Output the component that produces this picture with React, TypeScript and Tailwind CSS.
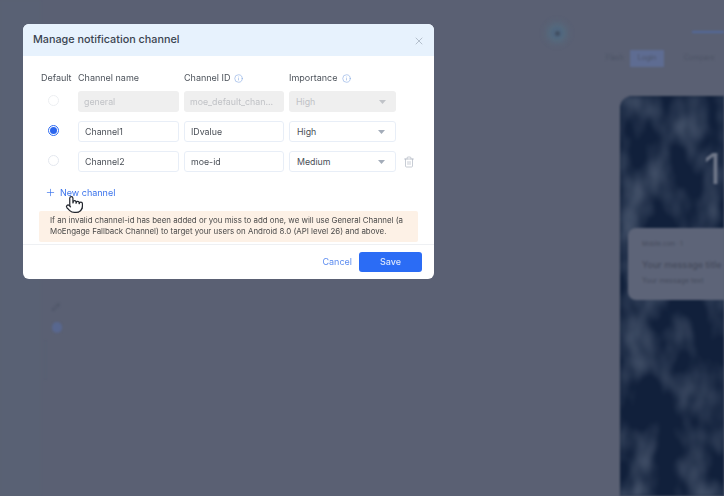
import { Info, Pencil, Plus, Pointer, Trash2, X } from "lucide-react"

function Caret({ muted }: { muted?: boolean }) {
  return (
    <svg width="7" height="4" viewBox="0 0 7 4" className="shrink-0">
      <path d="M0 0h7L3.5 4z" fill={muted ? "#c0c3c8" : "#a3acb9"} />
    </svg>
  )
}

function Radio({ checked, disabled }: { checked?: boolean; disabled?: boolean }) {
  return (
    <div className="w-[37px] pl-[7px] pb-[2px] shrink-0 flex items-center">
      {checked ? (
        <div className="w-[11px] h-[11px] rounded-full border border-[#2f6bf0] flex items-center justify-center">
          <div className="w-[7px] h-[7px] rounded-full bg-[#2b66ee]" />
        </div>
      ) : (
        <div className={`w-[11px] h-[11px] rounded-full border ${disabled ? "border-[#eceef1]" : "border-[#e3e7ee]"}`} />
      )}
    </div>
  )
}

function Field({ value, width, disabled }: { value: string; width: string; disabled?: boolean }) {
  return (
    <div
      className={`${width} h-[21px] shrink-0 rounded-[3px] px-[6px] flex items-center text-[8.8px] truncate ${
        disabled ? "bg-[#efefef] text-[#c0c2c6]" : "bg-white border border-[#e8eef7] text-[#4a4f57]"
      }`}
    >
      {value}
    </div>
  )
}

function Select({ value, disabled }: { value: string; disabled?: boolean }) {
  return (
    <div
      className={`w-[107px] h-[21px] shrink-0 rounded-[3px] pl-[7px] pr-[10px] flex items-center justify-between text-[8.8px] ${
        disabled ? "bg-[#efefef] text-[#c0c2c6]" : "bg-white border border-[#e8eef7] text-[#4a4f57]"
      }`}
    >
      <span>{value}</span>
      <Caret muted={disabled} />
    </div>
  )
}

export default function App() {
  return (
    <div className="relative w-[724px] h-[496px] overflow-hidden bg-[#5a6073] font-['Inter',sans-serif]">
      {/* dimmed page behind the dialog */}
      <div className="flex h-full blur-[1px]">
        <div className="w-[41px] shrink-0 bg-[#596174]" />
        <div className="flex-1 pt-[27px] flex flex-col pl-[11px]">
          <div className="self-end mr-[43px] w-[12px] h-[12px] rounded-full bg-[#50667e] shadow-[0_0_6px_4px_#546c80] flex items-center justify-center">
            <div className="w-[5px] h-[5px] rounded-full bg-[#414f63]" />
          </div>
          <Pencil size={8} className="mt-[264px] text-[#474f60]" />
          <div className="w-[10px] h-[11px] rounded-full bg-[#58678f] mt-[11px]" />
          <div className="w-px h-[40px] ml-[-7px] mt-[7px] bg-[#566073]" />
        </div>
        <div className="w-[118px] shrink-0 flex flex-col items-start">
          <div className="h-[33px] w-full flex items-end justify-start">
            <div className="w-[32px] h-[2px] ml-[86px] bg-[#52699c]" />
          </div>
          <div className="mt-[17px] flex items-center text-[7px] text-[#4c5365]">
            <span className="w-[24px]">Flash</span>
            <span className="w-[34px] h-[17px] bg-[#5e6c92] flex items-center justify-center">Login</span>
            <span className="ml-[20px]">Compare</span>
          </div>
          <div className="relative mt-[29px] w-[104px] ml-[14px] h-[400px] rounded-tl-[12px] bg-[#11203b] overflow-hidden">
            <svg width="104" height="400" viewBox="0 0 104 400" className="absolute inset-0">
              <filter id="waves" x="0" y="0" width="100%" height="100%">
                <feTurbulence type="fractalNoise" baseFrequency="0.03 0.018" numOctaves="3" seed="7" />
                <feColorMatrix
                  type="matrix"
                  values="0 0 0 0 0.23  0 0 0 0 0.28  0 0 0 0 0.37  1.2 0 0 0 -0.5"
                />
                <feGaussianBlur stdDeviation="1.5" />
              </filter>
              <rect width="104" height="400" filter="url(#waves)" />
            </svg>
            <div className="absolute left-[84px] top-[48px] text-[42px] leading-[50px] text-[#70788a]">1</div>
            <div className="absolute left-[8px] top-[132px] w-[120px] h-[72px] rounded-[8px] bg-[#5d6478] px-[14px] pt-[11px] text-[7px] text-[#454b5c]">
              <div className="text-[6px]">Mobile.com · 1</div>
              <div className="mt-[10px] text-[9px] font-medium whitespace-nowrap">Your message title</div>
              <div className="mt-[4px] whitespace-nowrap">Your message text</div>
            </div>
          </div>
        </div>
      </div>

      {/* manage channel dialog */}
      <div className="absolute left-[23px] top-[24px] w-[411px] h-[255px] rounded-[6px] bg-white overflow-hidden flex flex-col blur-[0.3px]">
        <div className="h-[32px] shrink-0 bg-[#e7f2fd] pl-[10px] pr-[9px] pt-[1px] flex items-center justify-between">
          <span className="text-[10.8px] font-medium text-[#3a4450]">Manage notification channel</span>
          <X size={12} strokeWidth={1.5} className="text-[#a3afbc]" />
        </div>

        <div className="flex-1 pt-[16px]">
          <div className="flex items-center h-[12px] pl-[18px] text-[9px] text-[#4d535b]">
            <span className="w-[37px] shrink-0">Default</span>
            <span className="w-[106px] shrink-0">Channel name</span>
            <span className="w-[105px] shrink-0 flex items-center gap-[4px]">
              Channel ID <Info size={9} strokeWidth={1.5} className="text-[#7ea4e0]" />
            </span>
            <span className="flex items-center gap-[4px]">
              Importance <Info size={9} strokeWidth={1.5} className="text-[#7ea4e0]" />
            </span>
          </div>

          <div className="mt-[7px] pl-[18px] flex flex-col gap-[9px]">
            <div className="flex items-center">
              <Radio disabled />
              <Field value="general" width="w-[101px] mr-[5px]" disabled />
              <Field value="moe_default_chan..." width="w-[100px] mr-[5px]" disabled />
              <Select value="High" disabled />
            </div>
            <div className="flex items-center">
              <Radio checked />
              <Field value="Channel1" width="w-[101px] mr-[5px]" />
              <Field value="IDvalue" width="w-[100px] mr-[5px]" />
              <Select value="High" />
            </div>
            <div className="flex items-center">
              <Radio />
              <Field value="Channel2" width="w-[101px] mr-[5px]" />
              <Field value="moe-id" width="w-[100px] mr-[5px]" />
              <Select value="Medium" />
              <Trash2 size={12} strokeWidth={1.25} className="ml-[7px] text-[#a6afbb]" />
            </div>
          </div>

          <div className="relative mt-[14px] ml-[22px] flex items-center gap-[4px] h-[13px] text-[9px] text-[#3a73ec]">
            <Plus size={11} strokeWidth={1.5} />
            <span>New channel</span>
            <Pointer size={19} strokeWidth={1.5} fill="#ffffff" className="absolute left-[20px] top-[9px] text-[#20242c]" />
          </div>

          <div className="mt-[12px] mx-[16px] h-[31px] rounded-[2px] bg-[#fdf1e6] pl-[11px] pt-[4px] text-[7.9px] leading-[11px] text-[#4a4a4a]">
            <p className="whitespace-nowrap">If an invalid channel-id has been added or you miss to add one, we will use General Channel (a</p>
            <p className="whitespace-nowrap">MoEngage Fallback Channel) to target your users on Android 8.0 (API level 26) and above.</p>
          </div>
        </div>

        <div className="h-[35px] shrink-0 border-t border-[#eef0f3] pr-[12px] flex items-center justify-end gap-[7px]">
          <span className="text-[9px] text-[#5c8cf0]">Cancel</span>
          <button className="w-[63px] h-[20px] rounded-[3px] bg-[#2b6cf5] text-[9px] font-medium text-[#dbe6fd]">Save</button>
        </div>
      </div>
    </div>
  )
}
